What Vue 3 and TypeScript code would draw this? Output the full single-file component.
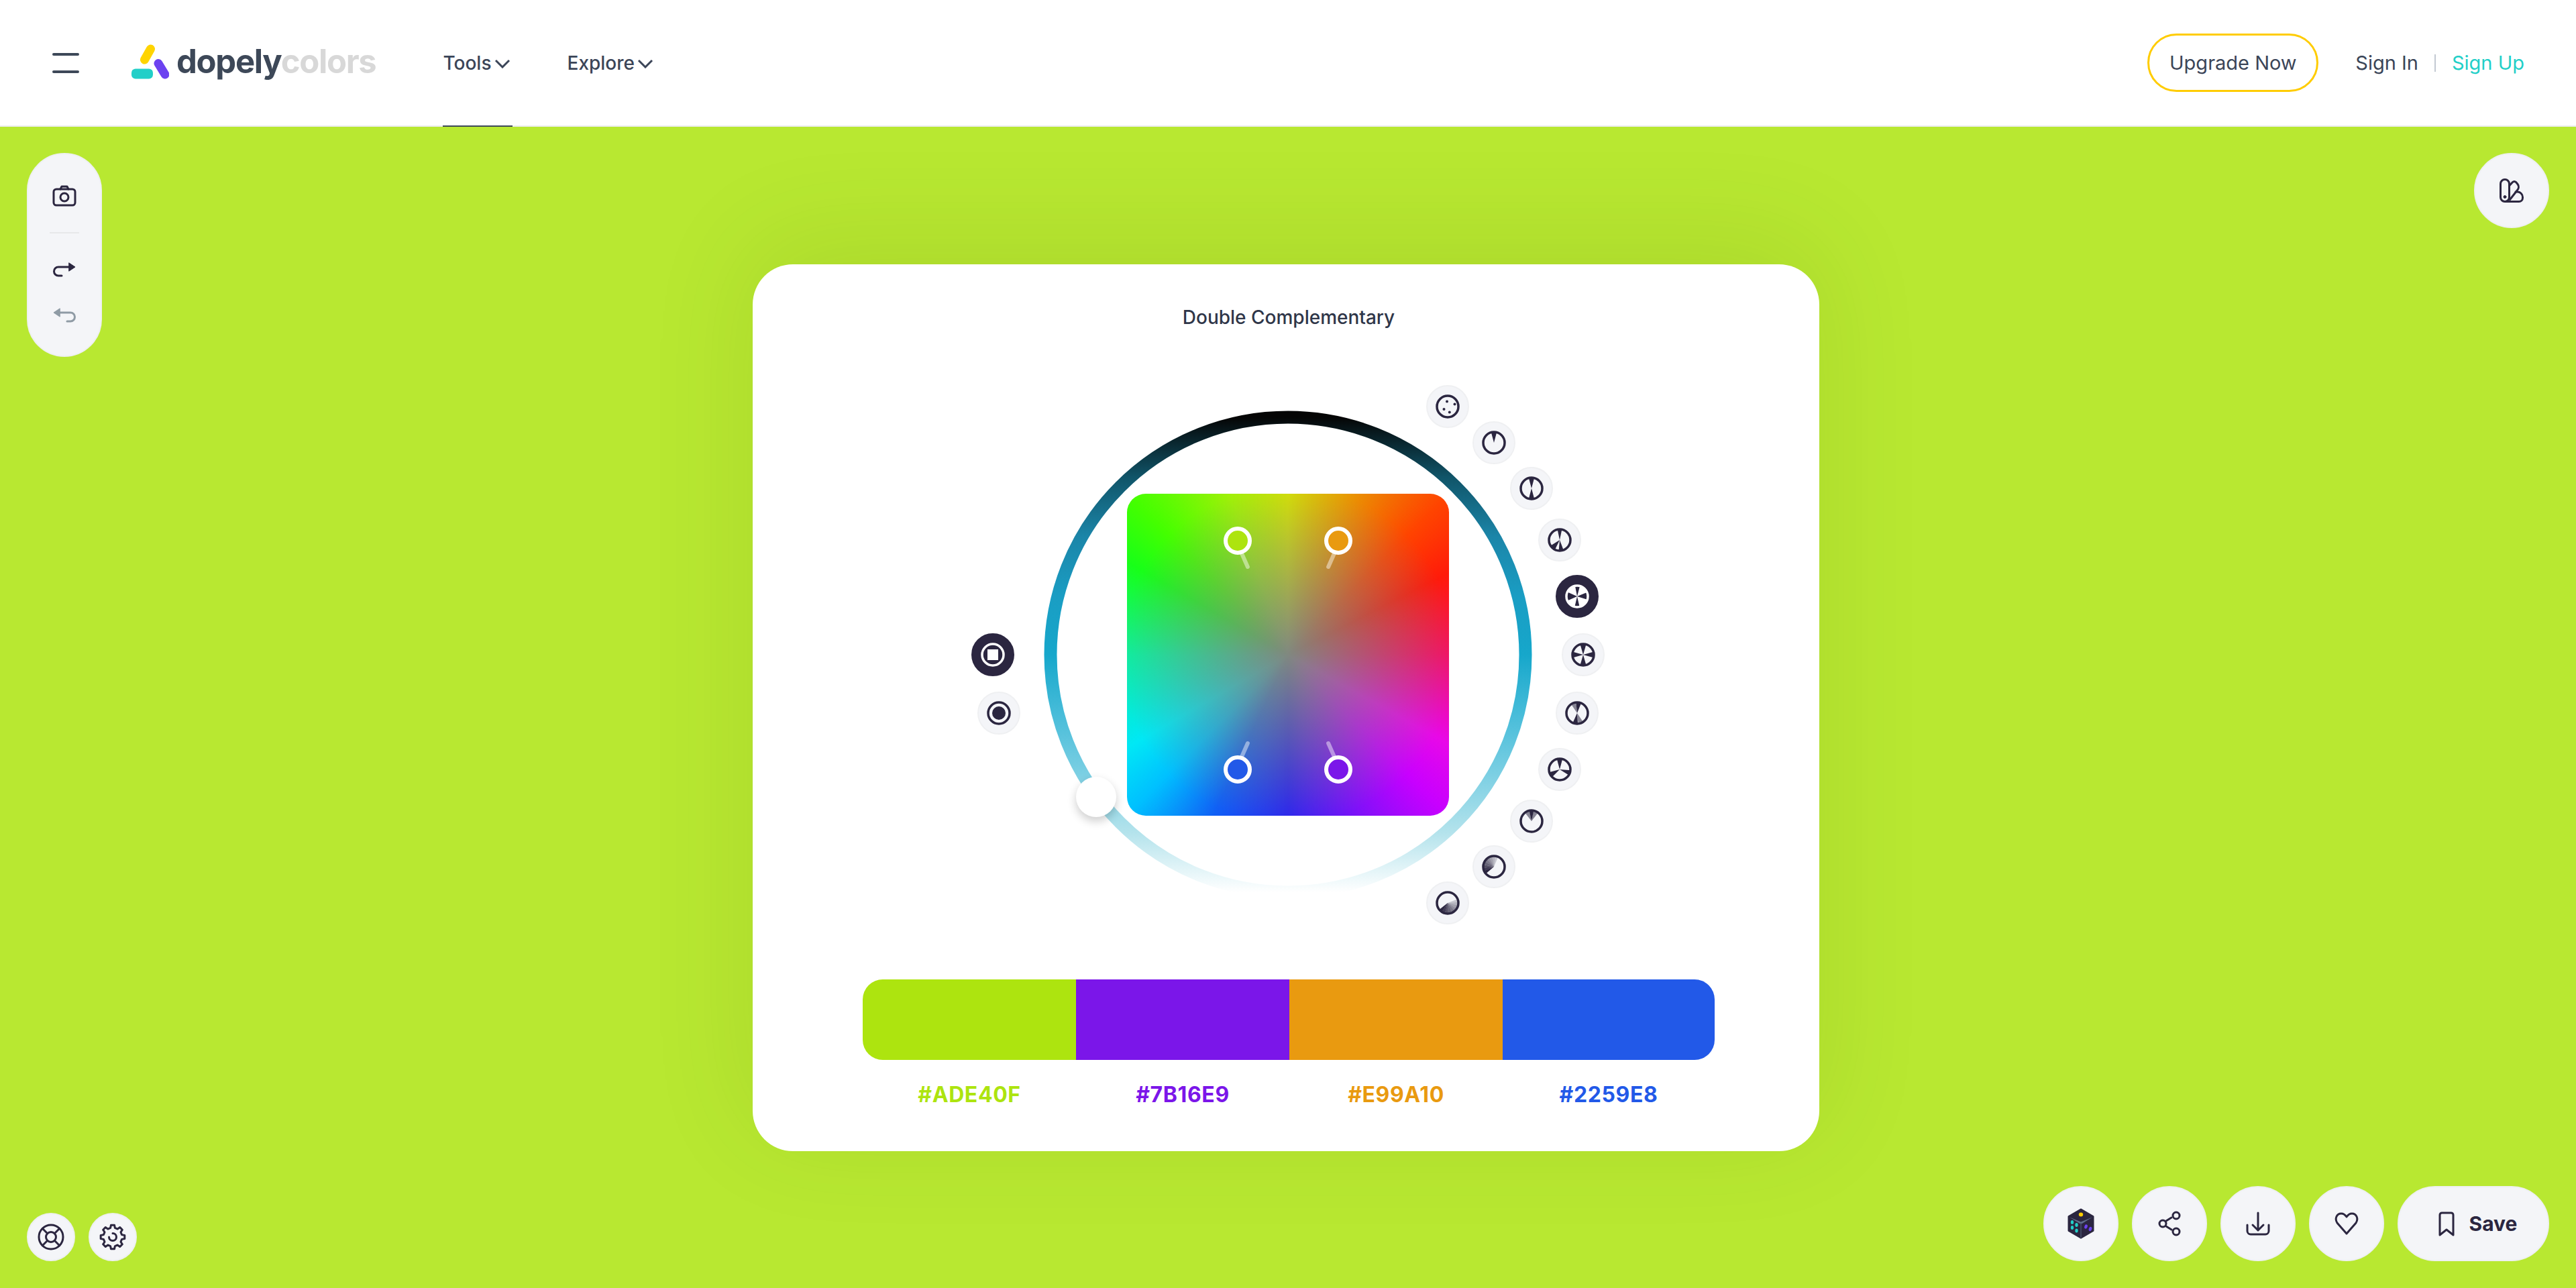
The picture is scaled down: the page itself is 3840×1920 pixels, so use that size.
<script setup lang="ts">
interface Blade {
  at: number
  half: number
  alpha: number
}

interface Harmony {
  name: string
  blades: Blade[]
  dots?: number[][]
}

const blade = (at: number, half = 14, alpha = 1): Blade => ({ at, half, alpha })

const fan = (start: number, step: number, count: number): Blade[] =>
  Array.from({ length: count }, (_, i) =>
    blade(start + step * i, Math.abs(step) / 2 + 0.4, 1 - (i / count) * 0.88)
  )

const harmonies: Harmony[] = [
  { name: 'Random', blades: [], dots: [[-1, -7.5], [10.5, -3.5], [-5.5, 4], [2.8, 8.5]] },
  { name: 'Single', blades: [blade(0, 15)] },
  { name: 'Complementary', blades: [blade(0, 15), blade(180, 15)] },
  { name: 'Split Complementary', blades: [blade(0, 12), blade(172, 13), blade(222, 16)] },
  { name: 'Double Complementary', blades: [blade(2, 13), blade(88, 20), blade(180, 13), blade(270, 24)] },
  { name: 'Square', blades: [blade(0, 16), blade(90, 16), blade(180, 16), blade(270, 16)] },
  {
    name: 'Compound',
    blades: [blade(-20, 14, 0.55), blade(8, 14), blade(160, 14, 0.55), blade(190, 14)]
  },
  { name: 'Triad', blades: [blade(0, 15), blade(108, 14), blade(240, 15)] },
  { name: 'Analogous', blades: [blade(-24, 14, 0.55), blade(0, 12), blade(24, 14, 0.55)] },
  { name: 'Shades', blades: fan(238, 17, 9) },
  { name: 'Tints', blades: fan(222, -18, 9) }
]

const shapes = ['Square', 'Circle']

const RADIUS = 440
const STEP = 0.2

const rightPos = (i: number) => {
  const angle = (i - 5) * STEP
  return {
    left: `calc(50% + ${(Math.cos(angle) * RADIUS - 32).toFixed(1)}px)`,
    top: `calc(50% + ${(Math.sin(angle) * RADIUS - 32).toFixed(1)}px)`
  }
}

const leftPos = (i: number) => {
  const angle = -i * STEP
  return {
    left: `calc(50% + ${(-Math.cos(angle) * RADIUS - 32).toFixed(1)}px)`,
    top: `calc(50% + ${(-Math.sin(angle) * RADIUS - 32).toFixed(1)}px)`
  }
}

const wedge = (b: Blade): string => {
  const r = 16.5
  const p = (d: number) => {
    const t = ((d - 90) * Math.PI) / 180
    return `${(18 + Math.cos(t) * r).toFixed(2)} ${(18 + Math.sin(t) * r).toFixed(2)}`
  }
  return `M18 18L${p(b.at - b.half)}A${r} ${r} 0 0 1 ${p(b.at + b.half)}Z`
}

const gearPath = (() => {
  const pts: string[] = []
  const teeth = 8
  for (let i = 0; i < teeth; i++) {
    const c = (i / teeth) * Math.PI * 2
    const w = Math.PI / teeth
    const at = (r: number, t: number) =>
      `${(20 + Math.cos(t) * r).toFixed(2)} ${(20 + Math.sin(t) * r).toFixed(2)}`
    pts.push(i === 0 ? `M${at(14, c - w * 0.62)}` : `L${at(14, c - w * 0.62)}`)
    pts.push(`L${at(18, c - w * 0.36)}`, `L${at(18, c + w * 0.36)}`, `L${at(14, c + w * 0.62)}`)
  }
  return pts.join('') + 'Z'
})()

const markers = [
  { color: '#ADE40F', cls: 'tl' },
  { color: '#E99A10', cls: 'tr' },
  { color: '#2259E8', cls: 'bl' },
  { color: '#7B16E9', cls: 'br' }
]

const palette = ['#ADE40F', '#7B16E9', '#E99A10', '#2259E8']

const ringStops = [
  { at: 0, color: '#050505' },
  { at: 0.125, color: '#105468' },
  { at: 0.25, color: '#1b85a8' },
  { at: 0.375, color: '#1a9dc3' },
  { at: 0.5, color: '#16a7cb' },
  { at: 0.625, color: '#47bcd9' },
  { at: 0.75, color: '#7bcfe3' },
  { at: 0.875, color: '#b4e3ec' },
  { at: 1, color: '#ffffff' }
]
</script>

<template>
  <div class="page">
    <header class="topbar">
      <button class="burger" aria-label="Menu"><span></span><span></span></button>
      <div class="logo">
        <svg width="56" height="52" viewBox="0 0 56 52">
          <path d="M28.500 7 19.500 23" class="logo-yellow" />
          <path d="M40 28.500 50 45" class="logo-purple" />
          <rect x="0" y="36.500" width="32" height="15" rx="6" fill="#22cfc8" />
        </svg>
        <span class="logo-text">dopely<em>colors</em></span>
      </div>
      <nav class="nav">
        <a class="nav-link current">Tools
          <svg width="24" height="14" viewBox="0 0 24 14"><path d="M2 2l10 10L22 2" /></svg>
        </a>
        <a class="nav-link">Explore
          <svg width="24" height="14" viewBox="0 0 24 14"><path d="M2 2l10 10L22 2" /></svg>
        </a>
      </nav>
      <div class="account">
        <button class="upgrade">Upgrade Now</button>
        <a class="sign-in">Sign In</a>
        <i class="sep"></i>
        <a class="sign-up">Sign Up</a>
      </div>
    </header>

    <main class="stage">
      <div class="tool-pill">
        <svg width="36" height="32" viewBox="0 0 36 32" class="ico">
          <path d="M12 6l2-4h8l2 4" />
          <rect x="2" y="6" width="32" height="24" rx="4" />
          <circle cx="18" cy="18" r="6" />
        </svg>
        <i class="pill-sep"></i>
        <svg width="34" height="22" viewBox="0 0 34 22" class="ico redo">
          <path d="M13 20H8A6.500 6.500 0 0 1 8 7H25" />
          <path d="M24 1l9 6-9 6z" class="solid" />
        </svg>
        <svg width="34" height="22" viewBox="0 0 34 22" class="ico undo">
          <path d="M21 20H26A6.500 6.500 0 0 0 26 7H9" />
          <path d="M10 1L1 7l9 6z" class="solid" />
        </svg>
      </div>

      <button class="round palette-btn" aria-label="Palette">
        <svg width="36" height="36" viewBox="0 0 36 36" class="ico">
          <rect x="1.500" y="1.500" width="13" height="33" rx="6.500" />
          <path d="M14.500 11l5-5.500a3.500 3.500 0 0 1 5 0l2.500 3a7 7 0 0 1-.5 9l-11 14" />
          <path d="M9 34.500H29a5.500 5.500 0 0 0 5.500-5.500v-1a8 8 0 0 0-7.500-8h-3" />
          <circle cx="8" cy="27.500" r="2" class="solid" />
        </svg>
      </button>

      <section class="card">
        <h1 class="card-title">Double Complementary</h1>

        <div class="wheel">
          <svg class="ring" width="740" height="740" viewBox="0 0 740 740">
            <defs>
              <linearGradient id="ring-grad" x1="0" y1="0" x2="0" y2="1">
                <stop v-for="s in ringStops" :key="s.at" :offset="s.at" :stop-color="s.color" />
              </linearGradient>
            </defs>
            <circle cx="370" cy="369" r="354" fill="none" stroke="url(#ring-grad)" stroke-width="19" />
          </svg>

          <div class="field">
            <div v-for="m in markers" :key="m.cls" class="marker" :class="m.cls">
              <i class="stem"></i>
              <i class="dot" :style="{ background: m.color }"></i>
            </div>
          </div>
          <i class="handle"></i>

          <button
            v-for="(s, i) in shapes"
            :key="s"
            class="mode"
            :class="{ active: i === 0 }"
            :style="leftPos(i)"
            :aria-label="s"
          >
            <svg width="36" height="36" viewBox="0 0 36 36">
              <circle cx="18" cy="18" r="16" class="mode-ring" />
              <rect v-if="i === 0" x="10" y="10" width="16" height="16" class="mode-fill" />
              <circle v-else cx="18" cy="18" r="10" class="mode-fill" />
            </svg>
          </button>

          <button
            v-for="(h, i) in harmonies"
            :key="h.name"
            class="mode"
            :class="{ active: i === 4 }"
            :style="rightPos(i)"
            :aria-label="h.name"
          >
            <svg width="36" height="36" viewBox="0 0 36 36">
              <circle cx="18" cy="18" r="16" class="mode-bg" />
              <path
                v-for="(b, k) in h.blades"
                :key="k"
                :d="wedge(b)"
                :opacity="b.alpha"
                class="mode-fill"
              />
              <circle cx="18" cy="18" r="16" class="mode-ring" />
              <circle
                v-for="(d, k) in h.dots"
                :key="'d' + k"
                :cx="18 + d[0]"
                :cy="18 + d[1]"
                r="2"
                class="mode-fill"
              />
            </svg>
          </button>
        </div>

        <div class="swatches">
          <div v-for="c in palette" :key="c" class="swatch" :style="{ background: c }"></div>
        </div>
        <div class="codes">
          <span v-for="c in palette" :key="c" class="code" :style="{ color: c }">{{ c }}</span>
        </div>
      </section>

      <div class="corner-left">
        <button class="round small" aria-label="Help">
          <svg width="40" height="40" viewBox="0 0 40 40" class="ico">
            <circle cx="20" cy="20" r="18" />
            <circle cx="20" cy="20" r="7.500" />
            <path d="M7.300 7.300l7.400 7.400M32.700 7.300l-7.400 7.400M7.300 32.700l7.400-7.400M32.700 32.700l-7.400-7.400" />
          </svg>
        </button>
        <button class="round small" aria-label="Settings">
          <svg width="40" height="40" viewBox="0 0 40 40" class="ico">
            <path :d="gearPath" />
            <path d="M20 14.500a5.500 5.500 0 1 1-5.500 5.500" />
          </svg>
        </button>
      </div>

      <div class="corner-right">
        <button class="round" aria-label="Random">
          <svg width="40" height="46" viewBox="0 0 40 46">
            <path d="M20 2L38 12.500V33.500L20 44 2 33.500V12.500Z" fill="#2b2640" stroke="#2b2640" stroke-width="3" stroke-linejoin="round" />
            <path d="M3 13.500L20 24l17-10.500L20 20.500Z" fill="#5f6f8c" />
            <path d="M20 22v22" stroke="#47506b" stroke-width="1.500" />
            <ellipse cx="20" cy="9.500" rx="3.200" ry="3" fill="#ffcc00" />
            <ellipse cx="7" cy="21" rx="2.200" ry="3" fill="#22cfc8" />
            <ellipse cx="13.500" cy="25" rx="2.200" ry="3" fill="#22cfc8" />
            <ellipse cx="7" cy="29" rx="2.200" ry="3" fill="#22cfc8" />
            <ellipse cx="13.500" cy="33.500" rx="2.200" ry="3" fill="#22cfc8" />
            <ellipse cx="27.500" cy="27.500" rx="2.200" ry="3.200" transform="rotate(20 27.500 27.500)" fill="#6c42f0" />
            <ellipse cx="34" cy="31" rx="2.200" ry="3.200" transform="rotate(20 34 31)" fill="#6c42f0" />
          </svg>
        </button>
        <button class="round" aria-label="Share">
          <svg width="34" height="38" viewBox="0 0 34 38" class="ico">
            <circle cx="27" cy="7" r="5" />
            <circle cx="7" cy="19" r="5" />
            <circle cx="27" cy="31" r="5" />
            <path d="M12 15l8-5M12 23l8 5" />
          </svg>
        </button>
        <button class="round" aria-label="Download">
          <svg width="36" height="36" viewBox="0 0 36 36" class="ico">
            <path d="M18 2v26M10 20l8 8 8-8" />
            <path d="M2 20v9a5 5 0 0 0 5 5h22a5 5 0 0 0 5-5v-9" />
          </svg>
        </button>
        <button class="round" aria-label="Like">
          <svg width="36" height="34" viewBox="0 0 36 34" class="ico">
            <path d="M18 32L4 16C0 10 3 2 10 2c4 0 6 2 8 5 2-3 4-5 8-5 7 0 10 8 6 14Z" />
          </svg>
        </button>
        <button class="round save" aria-label="Save">
          <svg width="24" height="37" viewBox="0 0 24 37" class="ico">
            <path d="M2 35V5a3 3 0 0 1 3-3h14a3 3 0 0 1 3 3v30L12 27Z" />
          </svg>
          <span>Save</span>
        </button>
      </div>
    </main>
  </div>
</template>

<style>
html,
body {
  margin: 0;
  background: #b8e831;
}
</style>

<style scoped>
.page {
  display: flex;
  flex-direction: column;
  width: 3840px;
  height: 1920px;
  overflow: hidden;
  font-family: Inter, "Liberation Sans", sans-serif;
  color: #3b4558;
}

button {
  font-family: inherit;
  cursor: pointer;
}

.topbar {
  display: flex;
  align-items: center;
  height: 189px;
  box-sizing: border-box;
  padding: 0 78px;
  background: #fff;
  border-bottom: 2px solid #ececec;
}

.burger {
  display: flex;
  flex-direction: column;
  gap: 22px;
  width: 40px;
  padding: 0;
  margin: 0 78px 0 0;
  background: none;
  border: 0;
}

.burger span {
  height: 4px;
  border-radius: 2px;
  background: #3d4858;
}

.logo {
  display: flex;
  align-items: flex-start;
  gap: 11px;
  margin-top: -4px;
}

.logo-yellow,
.logo-purple {
  fill: none;
  stroke-width: 13;
  stroke-linecap: round;
}

.logo-yellow {
  stroke: #ffd400;
}

.logo-purple {
  stroke: #6c42f0;
}

.logo-text {
  font-size: 49px;
  line-height: 52px;
  font-weight: 700;
  letter-spacing: -1.3px;
  color: #3d4858;
}

.logo-text em {
  font-style: normal;
  color: #d8d8d8;
}

.nav {
  display: flex;
  align-items: center;
  gap: 82px;
  margin-left: 100px;
  align-self: stretch;
}

.nav-link {
  position: relative;
  display: flex;
  align-items: center;
  align-self: stretch;
  gap: 4px;
  padding-right: 3px;
  font-size: 28px;
  font-weight: 500;
}

.nav-link svg {
  margin-top: 3px;
}

.nav-link svg path {
  fill: none;
  stroke: #3b4558;
  stroke-width: 3;
}

.nav-link.current::after {
  content: "";
  position: absolute;
  left: 0;
  right: 0;
  bottom: -2px;
  height: 2px;
  background: #3d4858;
}

.account {
  display: flex;
  align-items: center;
  margin-left: auto;
  margin-right: -1px;
  font-size: 29px;
  font-weight: 400;
}

.upgrade {
  width: 255px;
  height: 87px;
  margin-right: 55px;
  border: 3px solid #ffcc00;
  border-radius: 44px;
  background: #fff;
  color: #3b4558;
  font-size: 29px;
}

.sep {
  width: 2px;
  height: 26px;
  margin: 0 24px;
  background: #c3c9d2;
}

.sign-up {
  color: #22cfc8;
}

.stage {
  position: relative;
  flex: 1;
  display: flex;
  align-items: center;
  justify-content: center;
  padding-right: 6px;
  background: #b8e831;
}

.tool-pill {
  position: absolute;
  left: 40px;
  top: 39px;
  width: 112px;
  height: 304px;
  box-sizing: border-box;
  padding-top: 46px;
  display: flex;
  flex-direction: column;
  align-items: center;
  border: 2px solid #eef0f1;
  border-radius: 56px;
  background: #f4f5f8;
}

.pill-sep {
  width: 44px;
  height: 2px;
  margin: 38px 0 43px;
  background: #e7e8ea;
}

.ico {
  fill: none;
  stroke: #2b2640;
  stroke-width: 3;
  stroke-linecap: round;
  stroke-linejoin: round;
}

.undo {
  margin-top: 46px;
  stroke: #8f9ba5;
}

.solid {
  fill: #2b2640;
  stroke-width: 1;
}

.undo .solid {
  fill: #8f9ba5;
}

.round {
  display: flex;
  align-items: center;
  justify-content: center;
  width: 112px;
  height: 112px;
  padding: 0;
  border: 2px solid #eef0f1;
  border-radius: 56px;
  background: #f4f5f8;
}

.round.small {
  width: 72px;
  height: 72px;
}

.palette-btn {
  position: absolute;
  top: 39px;
  right: 40px;
}

.card {
  width: 1590px;
  height: 1322px;
  margin-top: 1px;
  box-sizing: border-box;
  padding: 58px 156px 0 164px;
  border-radius: 60px;
  background: #fff;
  box-shadow: 0 -30px 160px rgba(60, 80, 0, 0.11);
}

.card-title {
  margin: 0 0 82px;
  font-size: 28px;
  line-height: 42px;
  font-weight: 500;
  text-align: center;
  color: #2f3648;
}

.wheel {
  position: relative;
  display: flex;
  align-items: center;
  justify-content: center;
  width: 1268px;
  height: 800px;
}

.ring {
  position: absolute;
  left: calc(50% - 370px);
  top: calc(50% - 369px);
}

.field {
  position: relative;
  width: 480px;
  height: 480px;
  border-radius: 28px;
  background:
    radial-gradient(circle closest-side, rgba(128, 136, 128, 1), rgba(128, 136, 128, 0) 105%),
    conic-gradient(
      #d4e006,
      #ff4400 45deg,
      #ff1a0a 63deg,
      #f51065 90deg,
      #e808e8 119deg,
      #c800ff 135deg,
      #2a24f0 180deg,
      #1060f5 205deg,
      #00c0ff 225deg,
      #00e8f5 240deg,
      #0cf0a0 270deg,
      #18ff18 300deg,
      #44ff00 315deg,
      #a0f008 340deg,
      #d4e006
    );
}

.marker {
  position: absolute;
  width: 42px;
  height: 42px;
}

.marker.tl {
  left: 144px;
  top: 49px;
}

.marker.tr {
  left: 294px;
  top: 49px;
}

.marker.bl {
  left: 144px;
  top: 390px;
}

.marker.br {
  left: 294px;
  top: 390px;
}

.dot {
  position: absolute;
  inset: 0;
  box-sizing: border-box;
  border: 6px solid #fff;
  border-radius: 50%;
}

.stem {
  position: absolute;
  left: 18px;
  width: 6px;
  height: 30px;
  border-radius: 3px;
  background: rgba(255, 255, 255, 0.45);
}

.tl .stem {
  top: 34px;
  transform: translateX(10px) rotate(-24deg);
}

.tr .stem {
  top: 34px;
  transform: translateX(-10px) rotate(24deg);
}

.bl .stem {
  bottom: 34px;
  transform: translateX(10px) rotate(24deg);
}

.br .stem {
  bottom: 34px;
  transform: translateX(-10px) rotate(-24deg);
}

.handle {
  position: absolute;
  left: calc(50% - 316px);
  top: calc(50% + 182px);
  width: 60px;
  height: 60px;
  border-radius: 50%;
  background: #fff;
  box-shadow: 0 6px 14px rgba(0, 0, 0, 0.2);
}

.mode {
  position: absolute;
  display: flex;
  align-items: center;
  justify-content: center;
  box-sizing: border-box;
  width: 64px;
  height: 64px;
  padding: 0;
  border: 2px solid #eff0f2;
  border-radius: 50%;
  background: #f4f5f8;
}

.mode-ring {
  fill: none;
  stroke: #2b2640;
  stroke-width: 3.5;
}

.mode-bg {
  fill: none;
}

.mode-fill {
  fill: #2b2640;
}

.mode.active {
  border-color: #2b2640;
  background: #2b2640;
}

.mode.active .mode-ring {
  stroke: #fff;
}

.mode.active .mode-bg {
  fill: #fff;
}

.mode.active rect.mode-fill {
  fill: #fff;
}

.swatches {
  display: grid;
  grid-template-columns: 318px 318px 318px 1fr;
  height: 120px;
  margin-top: 84px;
  border-radius: 30px;
  overflow: hidden;
}

.codes {
  display: grid;
  grid-template-columns: 318px 318px 318px 1fr;
  margin-top: 32px;
}

.code {
  font-size: 32px;
  line-height: 40px;
  font-weight: 700;
  letter-spacing: 0.6px;
  text-align: center;
}

.corner-left {
  position: absolute;
  left: 40px;
  bottom: 40px;
  display: flex;
  gap: 20px;
}

.corner-right {
  position: absolute;
  right: 40px;
  bottom: 40px;
  display: flex;
  gap: 20px;
}

.round.save {
  width: 226px;
  gap: 22px;
  padding-left: 13px;
  font-size: 30px;
  font-weight: 700;
  color: #2b2640;
}
</style>
